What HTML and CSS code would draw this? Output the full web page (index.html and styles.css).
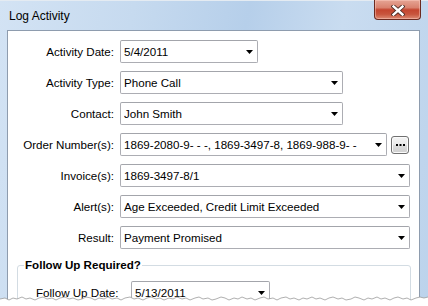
FILE: index.html
```html
<!DOCTYPE html>
<html>
<head>
<meta charset="utf-8">
<title>Log Activity</title>
<link rel="stylesheet" href="styles.css">
</head>
<body>
<div class="window">
  <div class="titlebar">Log Activity</div>
  <button class="close" aria-label="Close">
    <svg width="14" height="11" viewBox="0 0 14 11">
      <path d="M2.5 1.5 L11.5 9.5 M11.5 1.5 L2.5 9.5" stroke="#4a2a24" stroke-width="4.2" stroke-linecap="square" fill="none"/>
      <path d="M2.5 1.5 L11.5 9.5 M11.5 1.5 L2.5 9.5" stroke="#ffffff" stroke-width="2.4" stroke-linecap="square" fill="none"/>
    </svg>
  </button>
  <div class="client">
    <div class="form">
      <label class="lbl">Activity Date:</label>
      <div class="field"><div class="combo w-date"><span class="val">5/4/2011</span><svg class="arrow" width="7" height="4" viewBox="0 0 7 4"><polygon points="0,0 7,0 3.5,4" fill="#000"/></svg></div></div>

      <label class="lbl">Activity Type:</label>
      <div class="field"><div class="combo w-mid"><span class="val">Phone Call</span><svg class="arrow" width="7" height="4" viewBox="0 0 7 4"><polygon points="0,0 7,0 3.5,4" fill="#000"/></svg></div></div>

      <label class="lbl">Contact:</label>
      <div class="field"><div class="combo w-mid"><span class="val">John Smith</span><svg class="arrow" width="7" height="4" viewBox="0 0 7 4"><polygon points="0,0 7,0 3.5,4" fill="#000"/></svg></div></div>

      <label class="lbl">Order Number(s):</label>
      <div class="field"><div class="combo w-order"><span class="val">1869-2080-9- - -, 1869-3497-8, 1869-988-9- -</span><svg class="arrow" width="7" height="4" viewBox="0 0 7 4"><polygon points="0,0 7,0 3.5,4" fill="#000"/></svg></div>
        <button class="ellipsis" aria-label="More"><svg width="9" height="2" viewBox="0 0 9 2"><rect x="0" y="0" width="2" height="2" fill="#000"/><rect x="3.5" y="0" width="2" height="2" fill="#000"/><rect x="7" y="0" width="2" height="2" fill="#000"/></svg></button></div>

      <label class="lbl">Invoice(s):</label>
      <div class="field"><div class="combo w-full"><span class="val">1869-3497-8/1</span><svg class="arrow" width="7" height="4" viewBox="0 0 7 4"><polygon points="0,0 7,0 3.5,4" fill="#000"/></svg></div></div>

      <label class="lbl">Alert(s):</label>
      <div class="field"><div class="combo w-full"><span class="val">Age Exceeded, Credit Limit Exceeded</span><svg class="arrow" width="7" height="4" viewBox="0 0 7 4"><polygon points="0,0 7,0 3.5,4" fill="#000"/></svg></div></div>

      <label class="lbl">Result:</label>
      <div class="field"><div class="combo w-full"><span class="val">Payment Promised</span><svg class="arrow" width="7" height="4" viewBox="0 0 7 4"><polygon points="0,0 7,0 3.5,4" fill="#000"/></svg></div></div>
    </div>

    <fieldset class="group">
      <legend>Follow Up Required?</legend>
      <div class="fu-row">
        <label class="fu-lbl">Follow Up Date:</label>
        <div class="combo w-fu"><span class="val">5/13/2011</span><svg class="arrow" width="7" height="4" viewBox="0 0 7 4"><polygon points="0,0 7,0 3.5,4" fill="#000"/></svg></div>
      </div>
    </fieldset>
  </div>

  <svg class="tear" width="428" height="12" viewBox="0 0 428 12">
    <polygon fill="#ffffff" points="0,5 5,4 9,6 13,4 17,5 22,3 26,5 30,4 35,6 39,4 43,3 47,5 52,4 56,6 60,4 65,3 69,5 73,4 78,6 82,5 86,3 91,4 95,6 99,4 104,5 108,3 112,5 117,4 121,6 125,4 130,3 134,5 138,4 143,6 147,4 151,3 156,5 160,4 164,6 169,4 173,5 177,3 182,5 186,4 190,6 195,4 199,3 203,5 208,4 212,6 216,5 221,3 225,4 229,6 234,4 238,5 242,3 247,5 251,4 255,6 260,4 264,3 268,5 273,4 277,6 281,4 286,3 290,5 294,4 299,6 303,4 307,5 312,3 316,5 320,4 325,6 329,4 333,3 338,5 342,4 346,6 351,5 355,3 359,4 364,6 368,4 372,5 377,3 381,5 385,4 390,6 394,4 398,3 403,5 407,4 411,6 416,4 420,3 424,4 428,3 428,12 0,12"/>
    <polyline fill="none" stroke="#9a9a9a" stroke-width="0.8" points="0,5 5,4 9,6 13,4 17,5 22,3 26,5 30,4 35,6 39,4 43,3 47,5 52,4 56,6 60,4 65,3 69,5 73,4 78,6 82,5 86,3 91,4 95,6 99,4 104,5 108,3 112,5 117,4 121,6 125,4 130,3 134,5 138,4 143,6 147,4 151,3 156,5 160,4 164,6 169,4 173,5 177,3 182,5 186,4 190,6 195,4 199,3 203,5 208,4 212,6 216,5 221,3 225,4 229,6 234,4 238,5 242,3 247,5 251,4 255,6 260,4 264,3 268,5 273,4 277,6 281,4 286,3 290,5 294,4 299,6 303,4 307,5 312,3 316,5 320,4 325,6 329,4 333,3 338,5 342,4 346,6 351,5 355,3 359,4 364,6 368,4 372,5 377,3 381,5 385,4 390,6 394,4 398,3 403,5 407,4 411,6 416,4 420,3 424,4 428,3"/>
  </svg>
</div>
</body>
</html>
```

FILE: styles.css
```css
html, body {
  margin: 0;
  padding: 0;
  background: #ffffff;
}

body {
  font-family: "Liberation Sans", Arial, sans-serif;
  font-size: 11.6px;
  color: #000;
}

.window {
  position: relative;
  width: 428px;
  height: 306px;
  overflow: hidden;
  box-sizing: border-box;
  padding: 0 8px 0 7px;
  background: linear-gradient(100deg, #d3e3f4 0%, #c6daef 28%, #b6cfea 52%, #c9dcf0 72%, #bcd3ec 100%);
  box-shadow: inset 0 1px 0 #e4ebf2;
}

.titlebar {
  height: 17px;
  padding: 8px 0 0 2px;
  margin-bottom: 5px;
  line-height: 17px;
  font-size: 12px;
  color: #000;
}

.close {
  position: absolute;
  top: 0;
  right: 7px;
  width: 47px;
  height: 20px;
  padding: 0;
  margin: 0;
  box-sizing: border-box;
  border: 1px solid #6b2a20;
  border-top: none;
  border-radius: 0 0 4px 4px;
  background: linear-gradient(#e6a595 0%, #d9826f 40%, #c4452f 52%, #c8553d 75%, #dc8a73 100%);
  box-shadow: inset 0 0 0 1px rgba(255, 210, 200, 0.45);
  display: flex;
  align-items: center;
  justify-content: center;
}

.close svg {
  display: block;
  margin-top: 1px;
}

.client {
  height: 300px;
  box-sizing: border-box;
  background: #ffffff;
  border: 1px solid #8e9cae;
  padding-top: 9px;
}

.form {
  display: grid;
  grid-template-columns: 106px 1fr;
  column-gap: 6px;
  row-gap: 8px;
}

.lbl {
  text-align: right;
  line-height: 23px;
  white-space: nowrap;
}

.field {
  display: flex;
  align-items: center;
  gap: 4px;
}

.combo {
  height: 23px;
  box-sizing: border-box;
  border: 1px solid #acadb3;
  border-top-color: #a3a5ab;
  border-radius: 2px;
  background: #ffffff;
  display: flex;
  align-items: center;
  padding: 0 4px 0 3px;
  line-height: 21px;
}

.val {
  flex: 1;
  white-space: nowrap;
  overflow: hidden;
}

.arrow {
  display: block;
  flex: none;
}

.w-date { width: 138px; }
.w-mid { width: 223px; }
.w-order { width: 267px; }
.w-full { width: 290px; }
.w-fu { width: 139px; }

.ellipsis {
  width: 18px;
  height: 18px;
  padding: 0;
  margin: 0;
  box-sizing: border-box;
  border: 1px solid #707070;
  border-radius: 3px;
  background: linear-gradient(#f3f3f3 0%, #ebebeb 48%, #dddddd 52%, #cfcfcf 100%);
  box-shadow: inset 0 0 0 1px #fbfbfb;
  display: flex;
  align-items: center;
  justify-content: center;
}

.ellipsis svg {
  display: block;
}

.group {
  margin: 9px 0 0 9px;
  width: 394px;
  box-sizing: border-box;
  border: 1px solid #d3dce3;
  border-radius: 3px;
  padding: 9px 0 20px 6px;
}

.group legend {
  padding: 0 1px;
  font-weight: bold;
  line-height: 14px;
}

.fu-row {
  display: grid;
  grid-template-columns: 86px 139px;
  column-gap: 9px;
  padding-left: 12px;
  align-items: center;
}

.fu-lbl {
  line-height: 23px;
  white-space: nowrap;
}

.tear {
  position: absolute;
  left: 0;
  bottom: 0;
  display: block;
}
```
